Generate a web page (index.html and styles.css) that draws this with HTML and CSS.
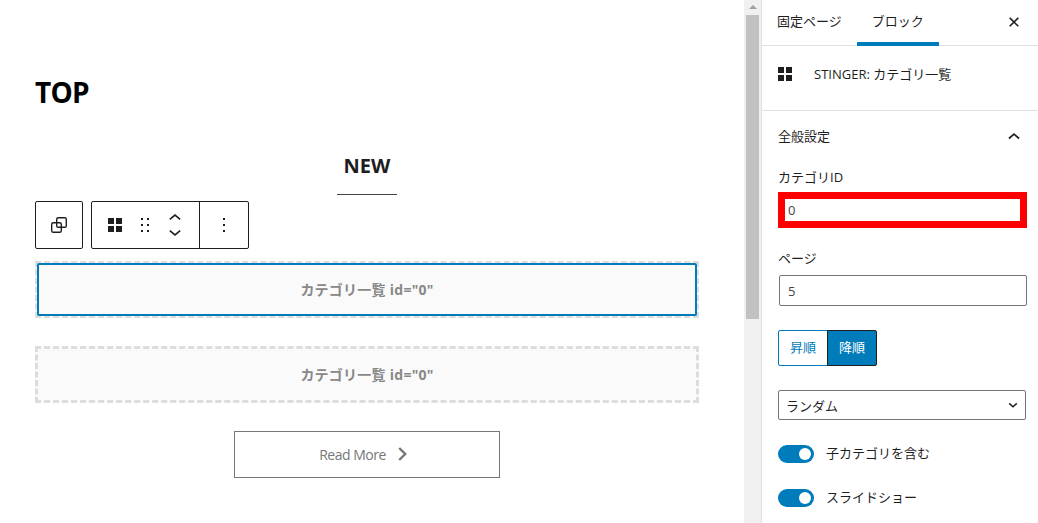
FILE: index.html
```html
<!DOCTYPE html>
<html lang="ja">
  <head>
    <title>固定ページを編集</title>
    <meta charset="UTF-8">
    <meta name="viewport" content="width=device-width, initial-scale=1.0">
    <link rel="stylesheet" href="styles.css">
  </head>
  <body>
    <div class="layout">
      <main class="editor">
        <h1>TOP</h1>
        <h2><span>NEW</span></h2>
        <div class="toolbar">
          <div class="toolbar-group">
            <button class="tool" aria-label="親ブロックを選択">
              <svg width="46" height="46" viewBox="0 0 46 46" fill="none" stroke="#1e1e1e" stroke-width="1.4">
                <rect x="20.7" y="15.7" width="9.6" height="9.6" rx="1.6"/>
                <rect x="15.7" y="20.7" width="9.6" height="9.6" rx="1.6"/>
              </svg>
            </button>
          </div>
          <div class="toolbar-group">
            <button class="tool grid-tool" aria-label="カテゴリ一覧">
              <svg width="14" height="14" viewBox="0 0 14 14" fill="#1e1e1e"><path d="M0 0h6v6H0zM8 0h6v6H8zM0 8h6v6H0zM8 8h6v6H8z"/></svg>
            </button>
            <button class="tool drag-tool" aria-label="ドラッグ">
              <svg width="8" height="14" viewBox="0 0 8 14" fill="#1e1e1e"><path d="M0 0h2v2H0zM6 0h2v2H6zM0 6h2v2H0zM6 6h2v2H6zM0 12h2v2H0zM6 12h2v2H6z"/></svg>
            </button>
            <button class="tool move-tool" aria-label="移動">
              <svg width="12" height="22" viewBox="0 0 12 22" fill="none" stroke="#1e1e1e" stroke-width="1.6"><path d="M.8 5.3L6 1.1l5.2 4.2M.8 16.7L6 20.9l5.2-4.2"/></svg>
            </button>
            <button class="tool more-tool" aria-label="オプション">
              <svg width="2" height="14" viewBox="0 0 2 14" fill="#1e1e1e"><path d="M0 0h2v2H0zM0 6h2v2H0zM0 12h2v2H0z"/></svg>
            </button>
          </div>
        </div>
        <div class="block selected">カテゴリ一覧 id="0"</div>
        <div class="block">カテゴリ一覧 id="0"</div>
        <a class="read-more">
          <span>Read More</span>
          <svg width="10" height="16" viewBox="0 0 10 16" fill="none" stroke="#777" stroke-width="2.4"><path d="M1.2 1l6 6-6 6"/></svg>
        </a>
      </main>
      <div class="scrollbar">
        <div class="arrow"></div>
        <div class="thumb"></div>
      </div>
      <aside class="sidebar">
        <div class="tabs">
          <button class="tab">固定ページ</button>
          <button class="tab active">ブロック</button>
          <button class="close" aria-label="閉じる">
            <svg width="10" height="10" viewBox="0 0 10 10" fill="none" stroke="#1e1e1e" stroke-width="1.6"><path d="M.7.9l8.6 8.4M9.3.9L.7 9.3"/></svg>
          </button>
        </div>
        <div class="card">
          <svg width="14" height="14" viewBox="0 0 14 14" fill="#1e1e1e"><path d="M0 0h6v6H0zM8 0h6v6H8zM0 8h6v6H0zM8 8h6v6H8z"/></svg>
          <span>STINGER: カテゴリ一覧</span>
        </div>
        <div class="panel">
          <div class="panel-title">
            <span>全般設定</span>
            <svg width="12" height="8" viewBox="0 0 12 8" fill="none" stroke="#1e1e1e" stroke-width="1.7"><path d="M.9 6.5L6 2.2l5.1 4.3"/></svg>
          </div>
          <label for="category">カテゴリID</label>
          <input type="text" id="category" class="highlight" value="0">
          <label for="page">ページ</label>
          <input type="text" id="page" class="page" value="5">
          <div class="order">
            <button>昇順</button>
            <button class="primary">降順</button>
          </div>
          <div class="select">
            <span>ランダム</span>
            <svg width="10" height="6" viewBox="0 0 10 6" fill="none" stroke="#1e1e1e" stroke-width="1.5"><path d="M1.2 1.4L5 4.7l3.8-3.3"/></svg>
          </div>
          <div class="toggle-row"><span class="toggle"></span><span class="toggle-label">子カテゴリを含む</span></div>
          <div class="toggle-row"><span class="toggle"></span><span class="toggle-label">スライドショー</span></div>
        </div>
      </aside>
    </div>
  </body>
</html>
```
FILE: styles.css
```css
* {
  box-sizing: border-box;
}
body {
  margin: 0;
  font-family: "Open Sans", "Noto Sans CJK JP", sans-serif;
  font-size: 13px;
  color: #1e1e1e;
  background: #fff;
  overflow: hidden;
}
button {
  font: inherit;
  color: inherit;
  padding: 0;
  border: none;
  background: none;
}
svg {
  display: block;
  flex: none;
}
.layout {
  display: flex;
  height: 523px;
}

/* editor */
.editor {
  width: 744px;
  padding: 72px 45px 0 35px;
}
h1 {
  margin: 0;
  height: 40px;
  font-size: 28px;
  line-height: 40px;
  letter-spacing: -0.7px;
  color: #000;
}
h2 {
  display: flex;
  justify-content: center;
  margin: 39px 0 6px;
  font-size: 20px;
  line-height: 30px;
}
h2 span {
  width: 60px;
  height: 44px;
  text-align: center;
  border-bottom: 1px solid #444;
}
.toolbar {
  display: flex;
  gap: 8px;
}
.toolbar-group {
  display: flex;
  height: 48px;
  border: 1px solid #1e1e1e;
  border-radius: 2px;
}
.tool {
  display: flex;
  align-items: center;
  justify-content: center;
  width: 46px;
}
.drag-tool {
  width: 14px;
}
.move-tool {
  width: 47px;
  padding-right: 1px;
}
.more-tool {
  width: 49px;
  border-left: 1px solid #1e1e1e;
}
.block {
  position: relative;
  display: flex;
  align-items: center;
  justify-content: center;
  height: 57px;
  margin-top: 28px;
  padding-bottom: 2px;
  border: 3px dashed #ddd;
  background: #fafafa;
  color: #888;
  font-size: 14px;
  font-weight: bold;
  letter-spacing: 0.25px;
}
.block.selected {
  margin-top: 12px;
}
.block.selected::after {
  content: "";
  position: absolute;
  inset: -1px;
  border: 2px solid #007cba;
  border-radius: 2px;
}
.read-more {
  display: flex;
  align-items: center;
  justify-content: center;
  gap: 12px;
  width: 266px;
  height: 47px;
  margin: 28px auto 0;
  padding-right: 7px;
  border: 1px solid #777;
  color: #777;
  font-size: 14px;
  letter-spacing: -0.5px;
}

/* scrollbar */
.scrollbar {
  width: 17px;
  padding: 5px 2px 0;
  background: #f0f0f0;
}
.arrow {
  width: 0;
  margin: 0 auto 6px;
  border: 4px solid transparent;
  border-top: none;
  border-bottom: 4px solid #a0a0a0;
}
.thumb {
  height: 304px;
  background: #c1c1c1;
}

/* sidebar */
.sidebar {
  flex: 1;
  border-left: 1px solid #e0e0e0;
}
.tabs {
  display: flex;
  height: 46px;
  border-bottom: 1px solid #e0e0e0;
}
.tab {
  height: 46px;
  padding: 0 15px 5px;
}
.tab.active {
  box-shadow: inset 0 -4px 0 #007cba;
}
.close {
  display: flex;
  align-items: center;
  margin: 0 19px 2px auto;
}
.card {
  display: flex;
  align-items: center;
  gap: 22px;
  height: 65px;
  padding: 0 16px 8px;
  border-bottom: 1px solid #e0e0e0;
}
.card span {
  padding-bottom: 2px;
}
.panel {
  padding: 15px 11px 0 16px;
}
.panel-title {
  display: flex;
  align-items: center;
  justify-content: space-between;
  height: 20px;
  margin-bottom: 21px;
  padding-right: 7px;
}
.panel-title span {
  padding-bottom: 2px;
}
label {
  display: block;
  height: 20px;
  line-height: 20px;
}
input {
  display: block;
  font: inherit;
  color: #444;
  border: 1px solid #757575;
  border-radius: 2px;
}
.highlight {
  width: 249px;
  height: 36px;
  margin: 5px 0 20px;
  padding: 0 3px;
  border: 7px solid #f00;
  border-radius: 0;
}
.page {
  width: 248px;
  height: 31px;
  margin: 7px 0 24px 1px;
  padding: 0 8px;
}
.order {
  display: flex;
  height: 36px;
  margin-bottom: 24px;
}
.order button {
  width: 50px;
  padding-bottom: 4px;
  border: 1px solid #007cba;
  border-radius: 2px 0 0 2px;
  color: #007cba;
}
.order .primary {
  margin-left: -1px;
  border-color: #1e1e1e;
  border-radius: 0 2px 2px 0;
  background: #007cba;
  color: #fff;
}
.select {
  display: flex;
  align-items: center;
  justify-content: space-between;
  width: 248px;
  height: 30px;
  margin-bottom: 25px;
  padding: 0 7px;
  border: 1px solid #757575;
  border-radius: 2px;
}
.toggle-row {
  display: flex;
  align-items: center;
  gap: 12px;
  height: 18px;
  margin-bottom: 26px;
}
.toggle-label {
  padding-bottom: 3px;
}
.toggle {
  width: 36px;
  height: 18px;
  padding: 3px;
  border-radius: 9px;
  background: #007cba;
}
.toggle::after {
  content: "";
  display: block;
  width: 12px;
  height: 12px;
  margin-left: auto;
  border-radius: 50%;
  background: #fff;
}
```
